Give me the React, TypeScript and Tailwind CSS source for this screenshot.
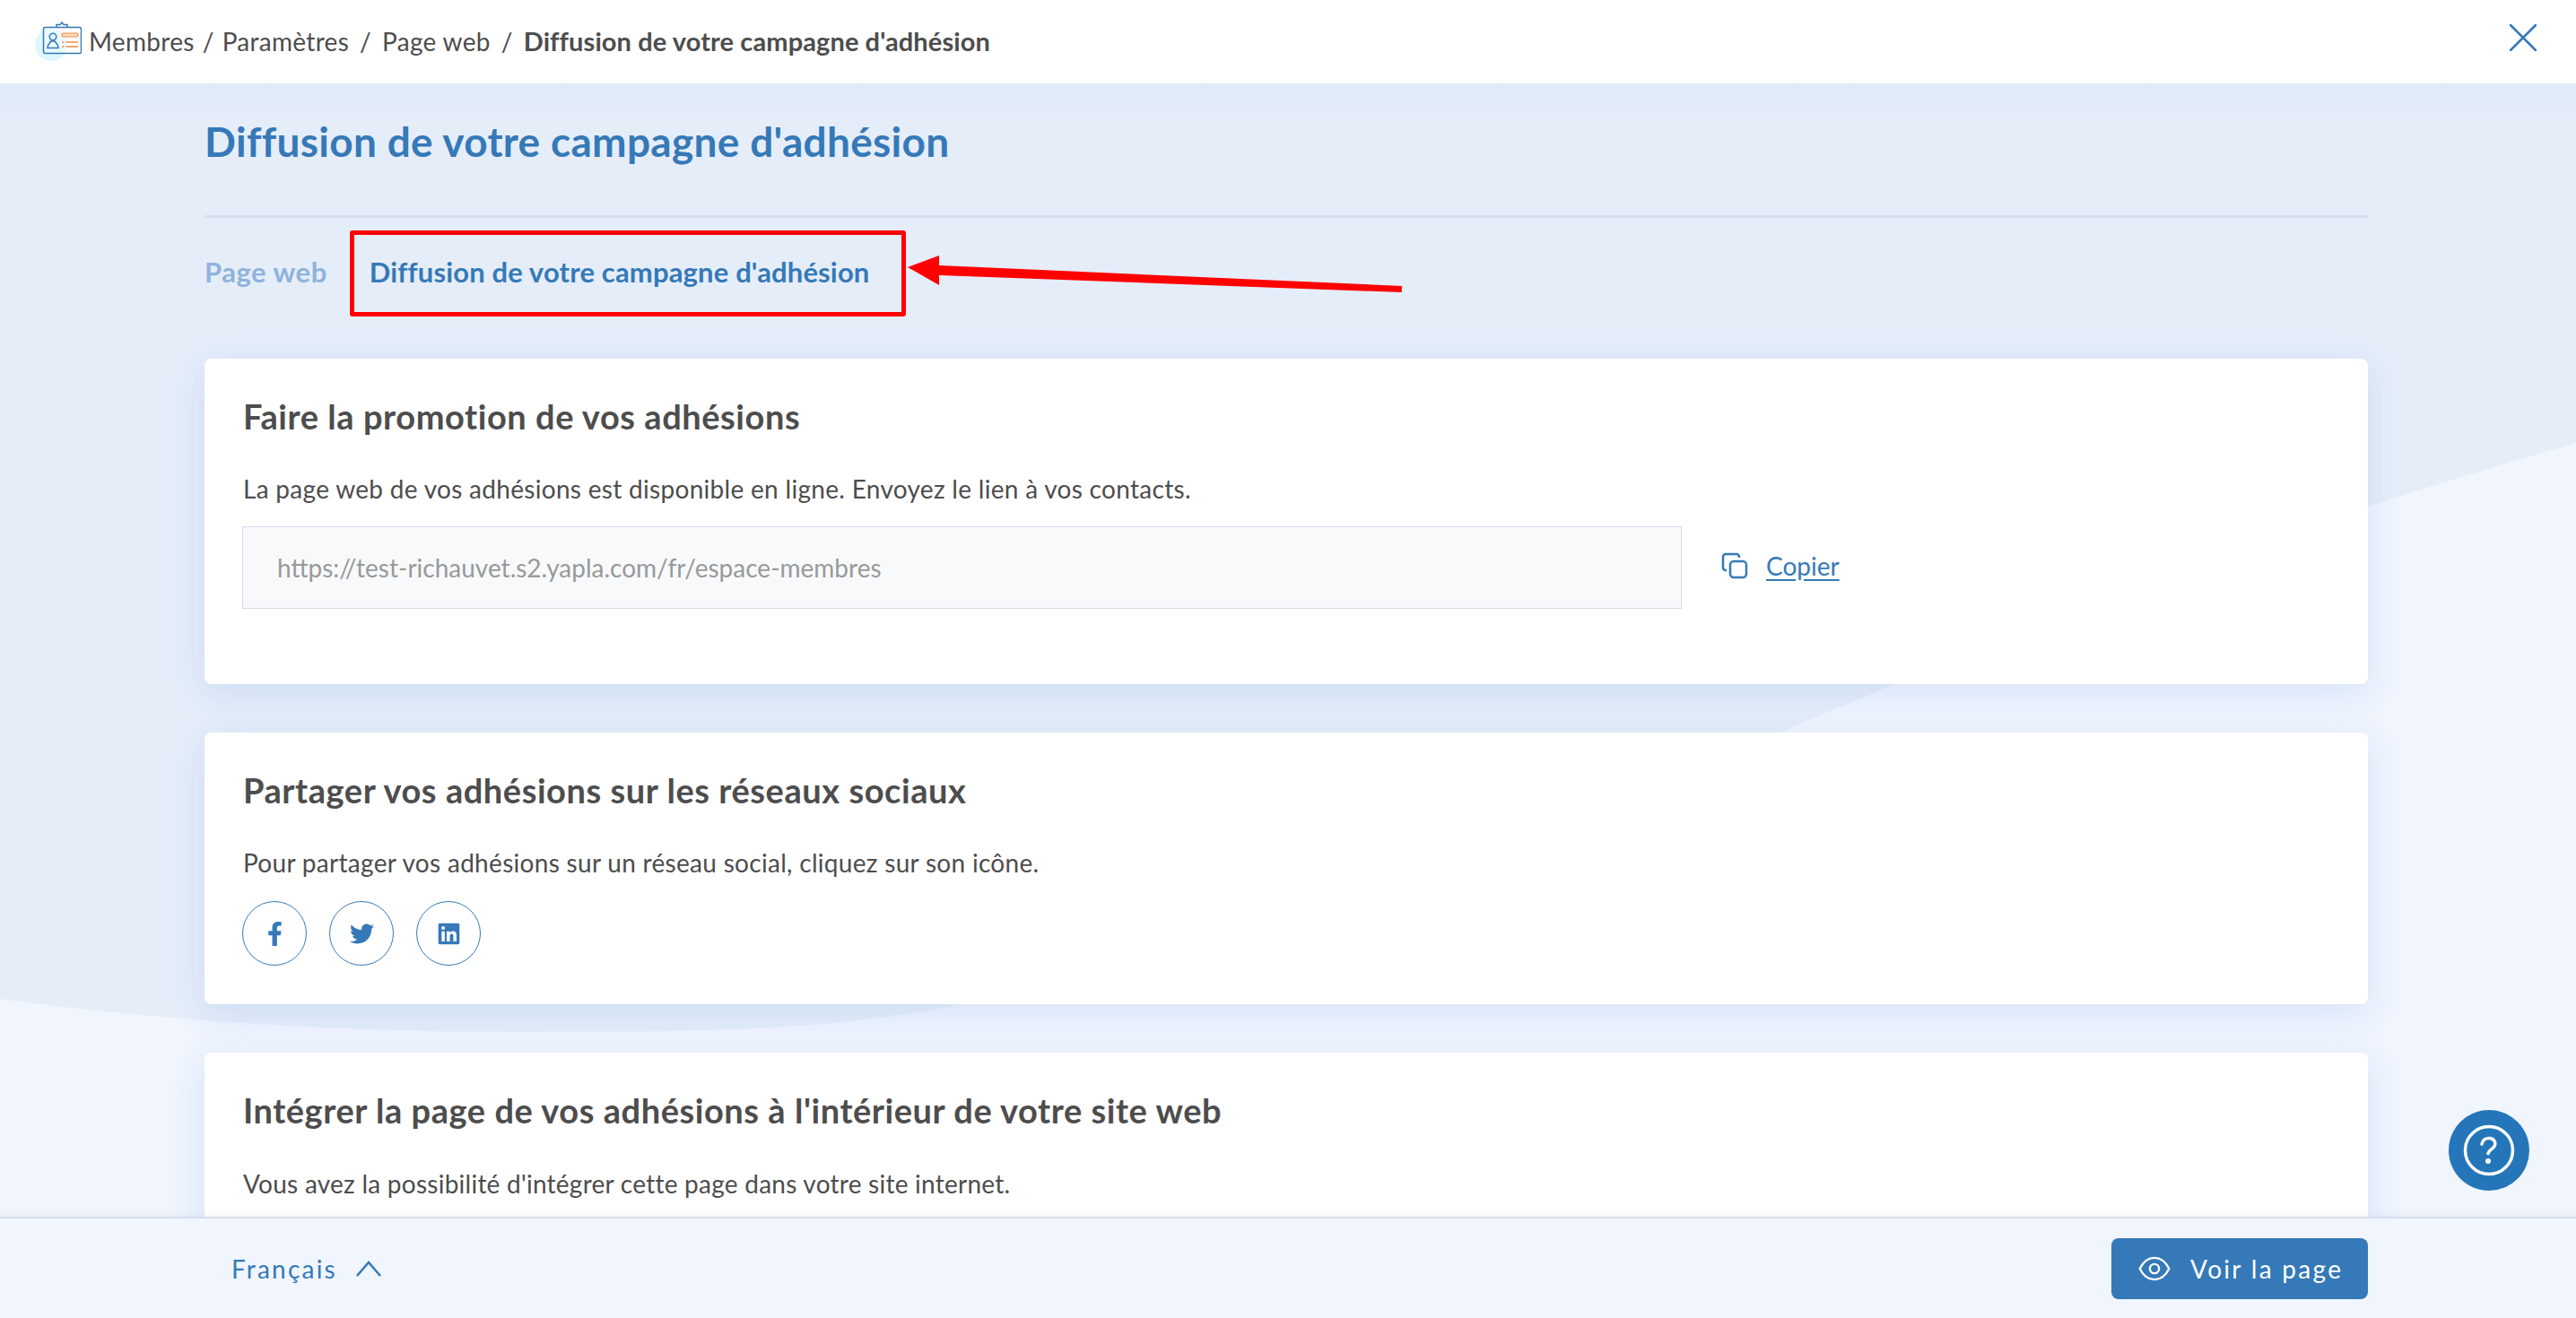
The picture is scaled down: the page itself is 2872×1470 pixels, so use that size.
import React from "react";
import { FaFacebookF, FaTwitter, FaLinkedin } from "react-icons/fa";

const font = { fontFamily: '"Lato", "Open Sans", sans-serif' };

function Logo() {
  return (
    <svg width="52" height="46" viewBox="0 0 52 46" className="shrink-0" fill="none">
      <circle cx="18" cy="26" r="18" fill="#dff7fe" />
      <rect x="9.500" y="6.500" width="42" height="29" rx="2" fill="#fff" fillOpacity="0.35" stroke="#3579b8" strokeWidth="1.500" />
      <path d="M24 6V3.500h4L30 1l2 2.500h4V6" stroke="#3579b8" strokeWidth="1.500" />
      <circle cx="20" cy="17" r="3.800" stroke="#3579b8" strokeWidth="1.500" />
      <path d="M14 29.500c0-5 2.500-5 4-7.500h4c1.500 2.500 4 2.500 4 7.500z" stroke="#3579b8" strokeWidth="1.500" />
      <rect x="30" y="13" width="18" height="4" rx="1.500" fill="#fcdcc4" stroke="#f58b3f" strokeWidth="1.200" />
      <path d="M30 23h2.500M34.500 23H48M30 28h2.500M34.500 28H48" stroke="#f58b3f" strokeWidth="1.500" />
    </svg>
  );
}

function Card({ title, children, className }: { title: string; children?: React.ReactNode; className: string }) {
  return (
    <section className={"shrink-0 rounded-lg bg-white px-[42px] shadow-[0_10px_40px_rgba(53,121,216,0.14)] " + className}>
      <h2 className="pl-[1px] pt-[44px] text-[38px] leading-[40px] font-bold tracking-[0.55px] text-[#4d4d4d]">{title}</h2>
      {children}
    </section>
  );
}

function Social({ children }: { children: React.ReactNode }) {
  return (
    <a className="flex h-[72px] w-[72px] items-center justify-center rounded-full border border-[#3579b8] text-[#3579b8]">
      {children}
    </a>
  );
}

export default function App() {
  return (
    <div style={font} className="flex h-[1470px] w-[2872px] flex-col overflow-hidden bg-white">
      <header className="relative z-10 flex h-[93px] shrink-0 items-center bg-white pl-[39px] pr-[44px] text-[28px] tracking-[0.3px] text-[#4d4d4d]">
        <div className="mr-[8px]"><Logo /></div>
        <span className="pb-[2px]">Membres</span>
        <span className="mx-[9px] pb-[2px]">/</span>
        <span className="pb-[2px]">Paramètres</span>
        <span className="mx-[12px] pb-[2px]">/</span>
        <span className="pb-[2px]">Page web</span>
        <span className="mx-[12px] pb-[2px]">/</span>
        <span className="pb-[2px] text-[29px] font-bold tracking-[0.1px]">Diffusion de votre campagne d'adhésion</span>
        <svg className="-mt-[9px] ml-auto" width="30" height="30" viewBox="0 0 30 30" fill="none" stroke="#3579b8" strokeWidth="2.500" strokeLinecap="round">
          <path d="M1 1l28 28M29 1L1 29" />
        </svg>
      </header>

      <main className="relative min-h-0 flex-1 overflow-hidden bg-[#e5edf9]">
        <svg className="absolute inset-0" width="2872" height="1264" viewBox="0 0 2872 1264" fill="#f0f5fe">
          <path d="M0 1021C200 1048 400 1058 570 1058C760 1058 930 1058 1071 1027C1400 960 1750 830 1985 724C2050 695 2080 685 2111 670C2300 590 2560 490 2872 401V1264H0Z" />
        </svg>
        <div className="absolute inset-x-0 top-0 h-[40px] bg-gradient-to-b from-[#dfe9f8] to-transparent" />

        <div className="relative flex flex-col pl-[228px] pr-[232px]">
          <h1 className="pt-[41px] text-[46px] leading-[48px] font-bold tracking-[0.3px] text-[#3579b8]">Diffusion de votre campagne d'adhésion</h1>
          <div className="mt-[58px] h-[3px] shrink-0 bg-[#d3dfeb]" />
          <nav className="mt-[42px] flex items-center text-[31px] leading-[36px] font-bold">
            <a className="tracking-[0.5px] text-[#8fb3dc]">Page web</a>
            <a className="ml-[47px] tracking-[0.15px] text-[#3579b8]">Diffusion de votre campagne d'adhésion</a>
          </nav>

          <div className="mt-[79px] flex flex-col gap-[54px]">
            <Card title="Faire la promotion de vos adhésions" className="h-[363px]">
              <p className="mt-[43px] pl-[1px] text-[28px] leading-[36px] tracking-[0.3px] text-[#4d4d4d]">
                La page web de vos adhésions est disponible en ligne. Envoyez le lien à vos contacts.
              </p>
              <div className="mt-[24px] flex items-center">
                <div className="flex h-[92px] w-[1605px] items-center border border-[#d3deea] bg-[#f7f9fb] pl-[38px] text-[28px] text-[#999999]">
                  https://test-richauvet.s2.yapla.com/fr/espace-membres
                </div>
                <svg className="-mt-[5px] ml-[44px]" width="30" height="30" viewBox="0 0 30 30" fill="none" stroke="#3579b8" strokeWidth="2.500">
                  <rect x="10" y="10" width="18" height="18" rx="4" />
                  <path d="M6 20H5a3 3 0 0 1-3-3V5a3 3 0 0 1 3-3h12a3 3 0 0 1 3 3v1" />
                </svg>
                <a className="-mt-[5px] ml-[20px] text-[28px] text-[#3579b8] underline underline-offset-4">Copier</a>
              </div>
            </Card>

            <Card title="Partager vos adhésions sur les réseaux sociaux" className="h-[303px]">
              <p className="mt-[43px] pl-[1px] text-[28px] leading-[36px] tracking-[0.3px] text-[#4d4d4d]">
                Pour partager vos adhésions sur un réseau social, cliquez sur son icône.
              </p>
              <div className="mt-[25px] flex gap-[25px]">
                <Social><FaFacebookF size={27} /></Social>
                <Social><FaTwitter size={27} /></Social>
                <Social><FaLinkedin size={27} /></Social>
              </div>
            </Card>

            <Card title="Intégrer la page de vos adhésions à l'intérieur de votre site web" className="h-[400px]">
              <p className="mt-[44px] pl-[1px] text-[28px] leading-[36px] tracking-[0.25px] text-[#4d4d4d]">
                Vous avez la possibilité d'intégrer cette page dans votre site internet.
              </p>
            </Card>
          </div>
        </div>

        <div className="absolute left-[390px] top-[164px] h-[96px] w-[620px] rounded-[3px] border-[5px] border-[#ff0000]" />
        <svg className="absolute left-[1000px] top-[180px]" width="580" height="60" viewBox="0 0 580 60" fill="#ff0000">
          <path d="M12 25L47 12v11l516 23-0.300 7L47 34v11z" />
        </svg>
        <button className="absolute left-[2730px] top-[1145px] flex h-[90px] w-[90px] items-center justify-center rounded-full bg-[#2476b9]">
          <svg width="58" height="58" viewBox="0 0 58 58" fill="none" stroke="#fff" strokeWidth="3.500" strokeLinecap="round">
            <circle cx="29" cy="29" r="26.500" />
            <path d="M21 22c1-5 5-7 9-6.500 5 .7 7 5 5 9-1.500 3-6 4-7 8" />
            <circle cx="28" cy="41" r="1.300" fill="#fff" />
          </svg>
        </button>
      </main>

      <footer className="relative z-10 flex h-[113px] shrink-0 items-center justify-between border-t-2 border-[#d5deec] bg-[#f0f5fe] pl-[258px] pr-[232px] shadow-[0_-4px_10px_rgba(0,0,0,0.03)]">
        <div className="flex items-center text-[28px] tracking-[2.200px] text-[#3579b8]">
          <span>Français</span>
          <svg className="ml-[20px]" width="30" height="20" viewBox="0 0 30 20" fill="none" stroke="#3579b8" strokeWidth="2.500">
            <path d="M2 18L15 3l13 15" />
          </svg>
        </div>
        <button className="flex h-[68px] w-[286px] items-center gap-[22px] rounded-lg bg-[#3579b8] pl-[30px] text-[28px] tracking-[2.300px] text-white">
          <svg width="36" height="28" viewBox="0 0 38 30" fill="none" stroke="#fff" strokeWidth="2.500">
            <path d="M1.500 15C6 6 12 2 19 2s13 4 17.500 13C32 24 26 28 19 28S6 24 1.500 15z" />
            <circle cx="19" cy="15" r="5.500" />
          </svg>
          Voir la page
        </button>
      </footer>
    </div>
  );
}
